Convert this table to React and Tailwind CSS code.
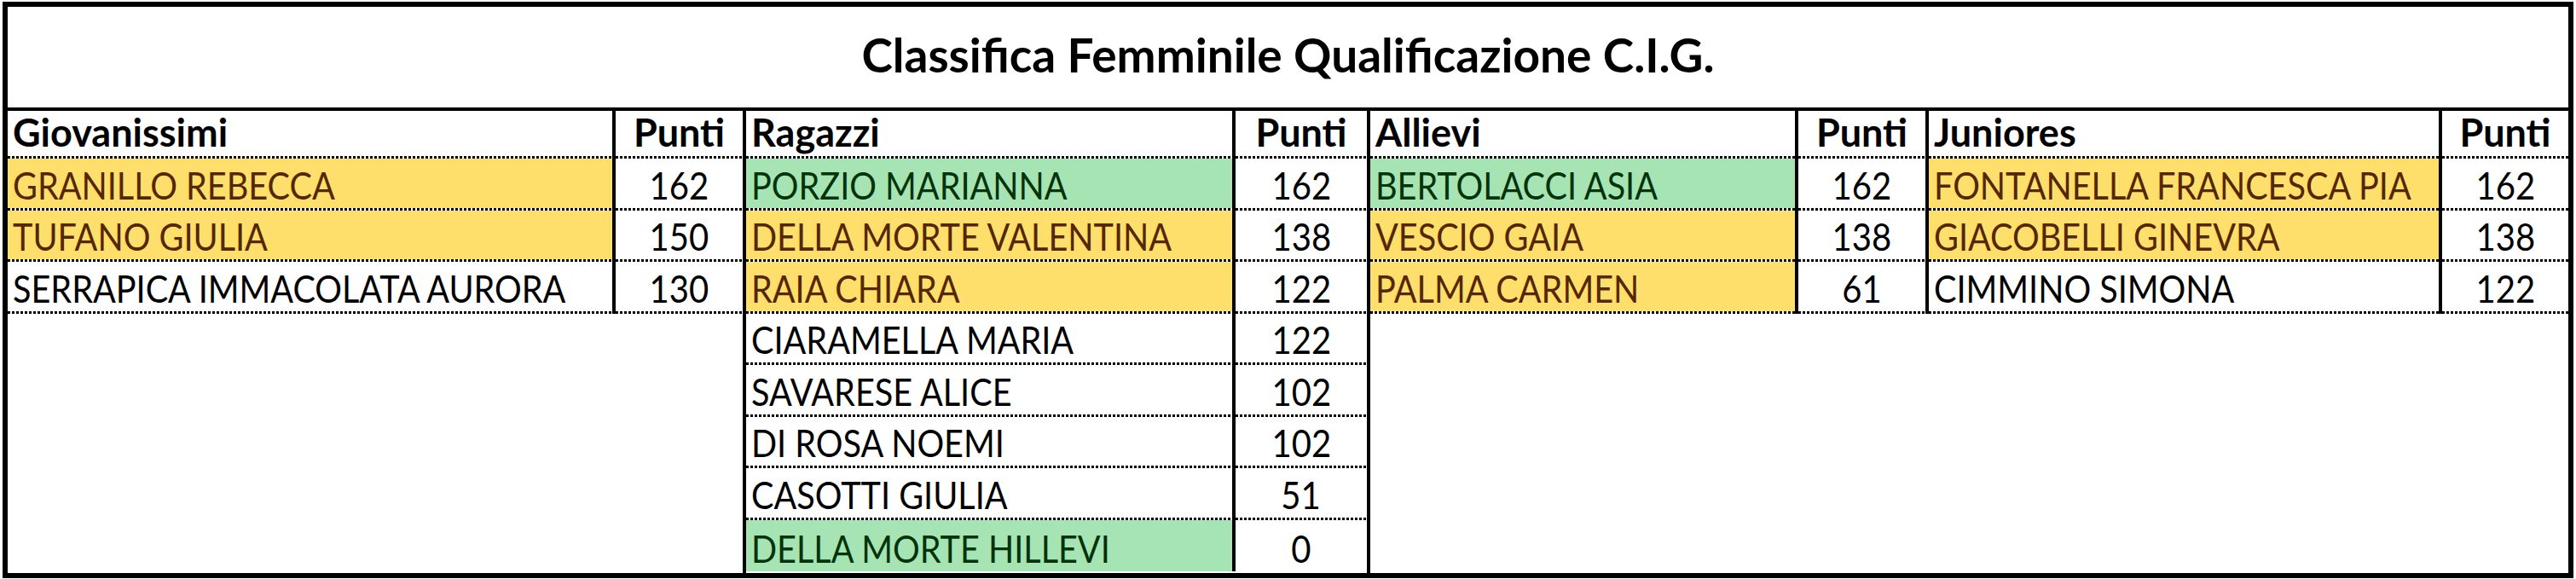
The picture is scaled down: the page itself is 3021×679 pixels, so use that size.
const tones = {
  y: "bg-[#ffdf6b] text-[#552700]",
  g: "bg-[#a6e5b3] text-[#03330a]",
  n: "bg-white text-black",
};

const groups = [
  {
    title: "Giovanissimi",
    nameW: "w-[713px]",
    ptsW: "w-[149px]",
    edge: "border-r-4 border-black",
    rows: [
      ["GRANILLO REBECCA", 162, "y"],
      ["TUFANO GIULIA", 150, "y"],
      ["SERRAPICA IMMACOLATA AURORA", 130, "n"],
    ],
  },
  {
    title: "Ragazzi",
    nameW: "w-[574px]",
    ptsW: "w-[154px]",
    edge: "border-r-4 border-black",
    rows: [
      ["PORZIO MARIANNA", 162, "g"],
      ["DELLA MORTE VALENTINA", 138, "y"],
      ["RAIA CHIARA", 122, "y"],
      ["CIARAMELLA MARIA", 122, "n"],
      ["SAVARESE ALICE", 102, "n"],
      ["DI ROSA NOEMI", 102, "n"],
      ["CASOTTI GIULIA", 51, "n"],
      ["DELLA MORTE HILLEVI", 0, "g"],
    ],
  },
  {
    title: "Allievi",
    nameW: "w-[502px]",
    ptsW: "w-[153px] border-r-4 border-black",
    edge: "",
    rows: [
      ["BERTOLACCI ASIA", 162, "g"],
      ["VESCIO GAIA", 138, "y"],
      ["PALMA CARMEN", 61, "y"],
    ],
  },
  {
    title: "Juniores",
    nameW: "w-[602px]",
    ptsW: "flex-1",
    edge: "flex-1",
    rows: [
      ["FONTANELLA FRANCESCA PIA", 162, "y"],
      ["GIACOBELLI GINEVRA", 138, "y"],
      ["CIMMINO SIMONA", 122, "n"],
    ],
  },
];

function Dots() {
  return <div className="h-[3px] shrink-0 bg-[repeating-linear-gradient(90deg,#000_0px,#000_3px,transparent_3px,transparent_5px)]" />;
}

function Row({ name, pts, tone, nameW, ptsW, head, last }) {
  return (
    <div className={`flex ${head ? "h-[56px] text-[45px] font-bold" : "h-[60.5px]"}`}>
      <div className={`flex flex-col border-r-4 border-black ${nameW}`}>
        <div className={`flex flex-1 items-end pb-[5px] pl-[6px] ${tones[tone]}`}>
          {head ? name : <span className="inline-block origin-left scale-x-[0.9] whitespace-nowrap">{name}</span>}
        </div>
        {!last && <Dots />}
      </div>
      <div className={`flex flex-col ${ptsW}`}>
        <div className="flex flex-1 items-end justify-center pb-[5px]">
          {head ? pts : <span className="inline-block scale-x-[0.91]">{pts}</span>}
        </div>
        {!last && <Dots />}
      </div>
    </div>
  );
}

function Group({ g }) {
  return (
    <div className={`flex flex-col ${g.edge}`}>
      <Row name={g.title} pts="Punti" tone="n" nameW={g.nameW} ptsW={g.ptsW} head />
      {g.rows.map(([name, pts, tone], i) => (
        <Row key={name} name={name} pts={pts} tone={tone} nameW={g.nameW} ptsW={g.ptsW} last={i === 7} />
      ))}
    </div>
  );
}

export default function App() {
  return (
    <div className="h-[679px] w-[3021px] overflow-hidden bg-white pl-[3px] pt-[2px] font-['Lato',sans-serif] text-[44px] leading-none text-black">
      <div className="flex h-[676px] w-[3015px] flex-col border-[6px] border-black">
        <div className="flex h-[122px] shrink-0 items-center justify-center border-b-4 border-black pb-[6px] text-[55px] font-bold">
          Classifica Femminile Qualificazione C.I.G.
        </div>
        <div className="flex flex-1">
          {groups.map((g) => (
            <Group key={g.title} g={g} />
          ))}
        </div>
      </div>
    </div>
  );
}
